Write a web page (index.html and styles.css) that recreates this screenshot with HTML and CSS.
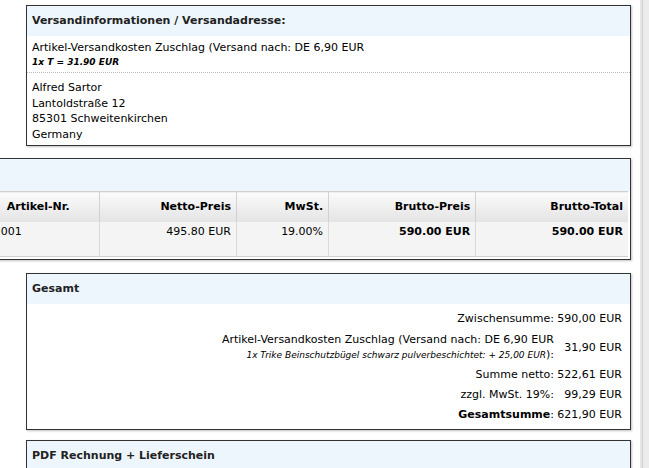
FILE: index.html
```html
<!DOCTYPE html>
<html lang="de">
<head>
  <meta charset="UTF-8">
  <title>Bestellung</title>
  <link rel="stylesheet" href="styles.css">
</head>
<body>
  <div class="main">

    <div class="box">
      <div class="box-head">Versandinformationen / Versandadresse:</div>
      <div class="box-sect first">
        Artikel-Versandkosten Zuschlag (Versand nach: DE 6,90 EUR<br>
        <span class="tiny-bold">1x T = 31.90 EUR</span>
      </div>
      <div class="box-sect address">
        Alfred Sartor<br>
        Lantoldstraße 12<br>
        85301 Schweitenkirchen<br>
        Germany
      </div>
    </div>

    <div class="box box-wide">
      <div class="box-head tall"></div>
      <table class="items">
        <colgroup>
          <col style="width:148px">
          <col style="width:122px">
          <col style="width:137px">
          <col style="width:92px">
          <col style="width:147px">
          <col style="width:152px">
        </colgroup>
        <tr>
          <th></th>
          <th class="center">Artikel-Nr.</th>
          <th>Netto-Preis</th>
          <th>MwSt.</th>
          <th>Brutto-Preis</th>
          <th>Brutto-Total</th>
        </tr>
        <tr>
          <td></td>
          <td class="nr">001</td>
          <td>495.80 EUR</td>
          <td>19.00%</td>
          <td class="strong">590.00 EUR</td>
          <td class="strong">590.00 EUR</td>
        </tr>
      </table>
    </div>

    <div class="box box-sum">
      <div class="box-head">Gesamt</div>
      <table class="totals">
        <tr>
          <td class="label">Zwischensumme:</td>
          <td class="value">590,00 EUR</td>
        </tr>
        <tr class="multi">
          <td class="label">Artikel-Versandkosten Zuschlag (Versand nach: DE 6,90 EUR<br><span class="tiny">1x Trike Beinschutzbügel schwarz pulverbeschichtet: + 25,00 EUR</span>):</td>
          <td class="value">31,90 EUR</td>
        </tr>
        <tr>
          <td class="label">Summe netto:</td>
          <td class="value">522,61 EUR</td>
        </tr>
        <tr>
          <td class="label">zzgl. MwSt. 19%:</td>
          <td class="value">99,29 EUR</td>
        </tr>
        <tr>
          <td class="label"><b>Gesamtsumme</b>:</td>
          <td class="value">621,90 EUR</td>
        </tr>
      </table>
    </div>

    <div class="box">
      <div class="box-head">PDF Rechnung + Lieferschein</div>
      <div class="box-sect empty"></div>
    </div>

  </div>
  <div class="strip"></div>
</body>
</html>
```

FILE: styles.css
```css
html, body {
  margin: 0;
  padding: 0;
  height: 100%;
}
body {
  display: flex;
  overflow: hidden;
  background-color: white;
  color: black;
  font-family: "DejaVu Sans", Verdana, sans-serif;
  font-size: 11px;
}
.main {
  flex: 1;
  min-width: 0;
  overflow: hidden;
  padding: 5px 9px 0 26px;
}
.strip {
  width: 9px;
  background: linear-gradient(to right, #e6e6e6 0, #e6e6e6 2px, #cfcfcf 2px, #cfcfcf 3px, #ececec 3px);
}
.box {
  border: 1px solid #333;
  box-shadow: 1px 1px 2px rgba(0, 0, 0, 0.25);
  margin-bottom: 12px;
  background-color: white;
}
.box-wide {
  margin-left: -200px;
  margin-bottom: 13px;
}
.box-sum {
  margin-bottom: 10px;
}
.box-head {
  background-color: #eef6fd;
  font-weight: bold;
  color: #222;
  padding: 8px 5px;
  line-height: 14px;
}
.box-head.tall {
  height: 16px;
}
.box-sect {
  padding: 5px;
  line-height: 14px;
}
.box-sect.first {
  padding-bottom: 3px;
}
.box-sect.empty {
  height: 40px;
}
.tiny-bold {
  font-size: 9px;
  font-weight: bold;
  font-style: italic;
}
.address {
  border-top: 1px dotted #bbb;
  line-height: 15.5px;
  padding-top: 7px;
  padding-bottom: 3px;
}
/* Artikeltabelle */
.items {
  table-layout: fixed;
  border-collapse: collapse;
  width: calc(100% - 4px);
  margin: 0 2px 2px 2px;
  border-top: 1px solid #d0d0d0;
  border-bottom: 1px solid #d0d0d0;
}
.items th {
  height: 30px;
  padding: 0 5px;
  text-align: right;
  font-weight: bold;
  background: linear-gradient(#fbfbfb, #e3e3e3);
  border-right: 1px solid #d2d2d2;
  box-sizing: border-box;
}
.items td {
  height: 35px;
  padding: 3px 5px 0 5px;
  vertical-align: top;
  line-height: 14px;
  text-align: right;
  background-color: #f4f4f4;
  border-right: 1px solid #dadada;
  box-sizing: border-box;
}
.items th:last-child,
.items td:last-child {
  border-right: none;
}
.items .center {
  text-align: center;
}
.items .nr {
  text-align: left;
  padding-left: 23px;
}
.items .strong {
  font-weight: bold;
}
/* Summen */
.totals {
  border-collapse: collapse;
  width: 100%;
  margin: 5px 0 4px 0;
}
.totals td {
  padding-top: 3px;
  padding-bottom: 3px;
  line-height: 14px;
  text-align: right;
  vertical-align: middle;
}
.totals .multi td {
  padding-bottom: 2px;
  line-height: 15px;
}
.totals .label {
  padding-left: 0;
  padding-right: 2px;
}
.totals .value {
  width: 66px;
  padding-left: 0;
  padding-right: 8px;
  white-space: nowrap;
}
.tiny {
  font-size: 9px;
  font-style: italic;
}
```
